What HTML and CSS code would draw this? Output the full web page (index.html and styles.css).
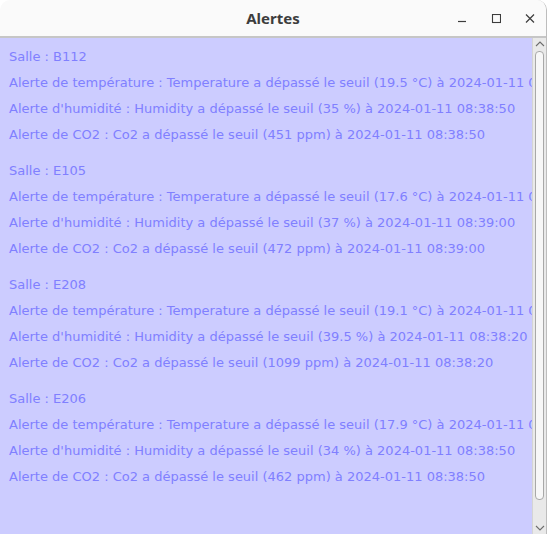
FILE: index.html
```html
<!DOCTYPE html>
<html lang="fr">
<head>
<meta charset="utf-8">
<title>Alertes</title>
<link rel="stylesheet" href="styles.css">
</head>
<body>
<div class="window">
  <div class="titlebar">
    <span class="title">Alertes</span>
    <div class="controls">
      <svg class="ctl" width="10" height="10" viewBox="0 0 10 10"><line x1="1" y1="7.5" x2="9" y2="7.5" stroke="#3c3c3c" stroke-width="1.2"/></svg>
      <svg class="ctl" width="10" height="10" viewBox="0 0 10 10"><rect x="1.5" y="0.5" width="8" height="8" fill="none" stroke="#3c3c3c" stroke-width="1.1"/></svg>
      <svg class="ctl" width="10" height="10" viewBox="0 0 10 10"><path d="M1 0.5 L9 8.5 M9 0.5 L1 8.5" stroke="#3c3c3c" stroke-width="1.2" fill="none"/></svg>
    </div>
  </div>
  <div class="body">
    <div class="content">
      <div class="group">
        <div class="line">Salle : B112</div>
        <div class="line">Alerte de température : Temperature a dépassé le seuil (19.5 °C) à 2024-01-11 08:38:50</div>
        <div class="line">Alerte d'humidité : Humidity a dépassé le seuil (35 %) à 2024-01-11 08:38:50</div>
        <div class="line">Alerte de CO2 : Co2 a dépassé le seuil (451 ppm) à 2024-01-11 08:38:50</div>
      </div>
      <div class="group">
        <div class="line">Salle : E105</div>
        <div class="line">Alerte de température : Temperature a dépassé le seuil (17.6 °C) à 2024-01-11 08:39:00</div>
        <div class="line">Alerte d'humidité : Humidity a dépassé le seuil (37 %) à 2024-01-11 08:39:00</div>
        <div class="line">Alerte de CO2 : Co2 a dépassé le seuil (472 ppm) à 2024-01-11 08:39:00</div>
      </div>
      <div class="group">
        <div class="line">Salle : E208</div>
        <div class="line">Alerte de température : Temperature a dépassé le seuil (19.1 °C) à 2024-01-11 08:38:20</div>
        <div class="line">Alerte d'humidité : Humidity a dépassé le seuil (39.5 %) à 2024-01-11 08:38:20</div>
        <div class="line">Alerte de CO2 : Co2 a dépassé le seuil (1099 ppm) à 2024-01-11 08:38:20</div>
      </div>
      <div class="group">
        <div class="line">Salle : E206</div>
        <div class="line">Alerte de température : Temperature a dépassé le seuil (17.9 °C) à 2024-01-11 08:38:50</div>
        <div class="line">Alerte d'humidité : Humidity a dépassé le seuil (34 %) à 2024-01-11 08:38:50</div>
        <div class="line">Alerte de CO2 : Co2 a dépassé le seuil (462 ppm) à 2024-01-11 08:38:50</div>
      </div>
    </div>
    <div class="scrollbar">
      <svg class="arrow" width="12" height="10" viewBox="0 0 12 10"><path d="M2 7 L6 3 L10 7" fill="none" stroke="#6e6e6e" stroke-width="1.1"/></svg>
      <div class="thumb"></div>
      <svg class="arrow" width="12" height="10" viewBox="0 0 12 10"><path d="M2 3 L6 7 L10 3" fill="none" stroke="#6e6e6e" stroke-width="1.1"/></svg>
    </div>
  </div>
</div>
</body>
</html>
```

FILE: styles.css
```css
html, body {
  margin: 0;
  padding: 0;
  background: #ffffff;
}
body {
  width: 550px;
  height: 534px;
  overflow: hidden;
}
.window {
  width: 547px;
  height: 534px;
  display: flex;
  flex-direction: column;
  border-radius: 10px 10px 0 0;
  overflow: hidden;
  border-right: 1px solid #bdbdbd;
  box-sizing: border-box;
}
.titlebar {
  height: 38px;
  flex: none;
  box-sizing: border-box;
  background: #fafafa;
  border-bottom: 2px solid #c6c6c6;
  display: flex;
  align-items: center;
  justify-content: center;
  position: relative;
}
.title {
  font-family: "Noto Sans", "DejaVu Sans", sans-serif;
  font-weight: bold;
  font-size: 15px;
  color: #3d3d3d;
}
.controls {
  position: absolute;
  right: 11px;
  top: 14px;
  display: flex;
  gap: 24px;
}
.ctl {
  display: block;
}
.body {
  flex: 1;
  display: flex;
  background: #ccccff;
  min-height: 0;
}
.content {
  flex: 1;
  min-width: 0;
  overflow: hidden;
  padding: 6px 0 0 9px;
  font-family: "DejaVu Sans", sans-serif;
  font-size: 13px;
  color: #8080ff;
}
.group {
  margin-bottom: 10px;
}
.line {
  line-height: 26px;
  white-space: nowrap;
}
.scrollbar {
  width: 13px;
  flex: none;
  background: #e9e9e9;
  border-left: 1px solid #d4d4d4;
  display: flex;
  flex-direction: column;
  align-items: center;
}
.arrow {
  display: block;
  flex: none;
  margin: 1px 0;
}
.thumb {
  flex: 1;
  width: 7px;
  margin: 1px 0 22px;
  background: #f7f7f7;
  border: 1px solid #a8a8a8;
  border-radius: 4px;
}
```
